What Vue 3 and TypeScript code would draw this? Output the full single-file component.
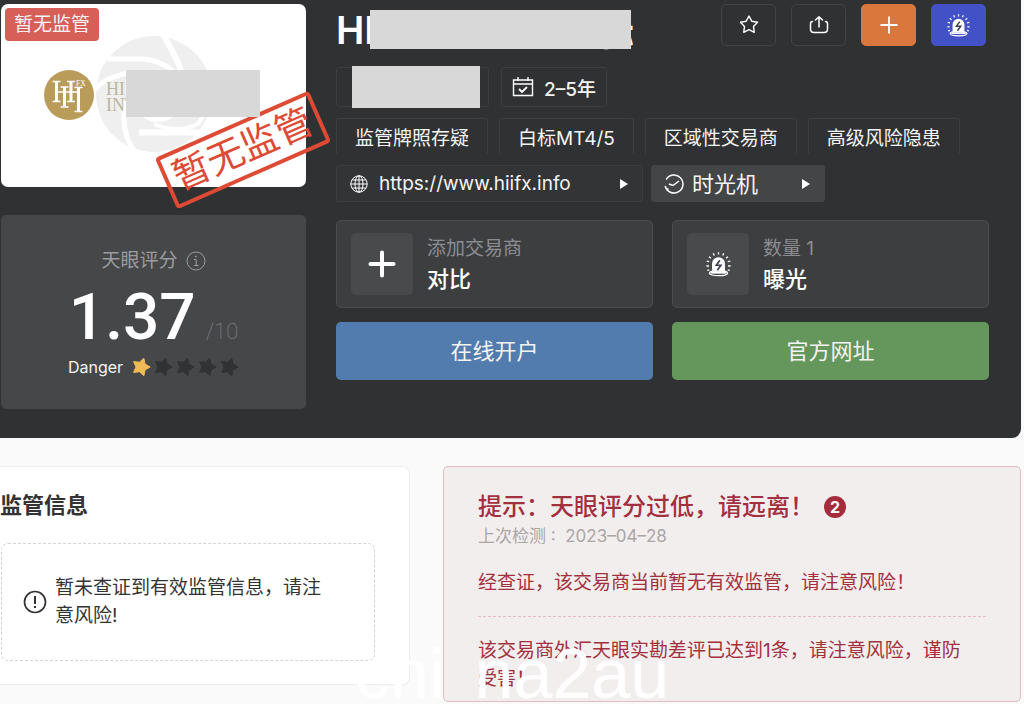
<script setup lang="ts">
const tags: string[] = ['监管牌照存疑', '白标MT4/5', '区域性交易商', '高级风险隐患']
const score = { value: '1.37', level: 'Danger', filled: 1, total: 5 }

function points(n: number, radius: number, inner: number, start: number): string {
  const out: string[] = []
  for (let i = 0; i < n * 2; i++) {
    const r = i % 2 ? inner : radius
    const a = start + (i * Math.PI) / n
    out.push(`${(10 + r * Math.cos(a)).toFixed(2)},${(10 + r * Math.sin(a)).toFixed(2)}`)
  }
  return out.join(' ')
}
const tiltedStar = points(5, 9.2, 5, 0)
const uprightStar = points(5, 9, 4.7, -Math.PI / 2)
</script>

<template>
  <div class="page">
    <svg class="defs" aria-hidden="true">
      <symbol id="siren" viewBox="0 0 24 24">
        <path d="M5.800 19V11.200a6.200 6.200 0 0 1 12.400 0V19z" fill="#fff" />
        <ellipse cx="12" cy="20.400" rx="8.800" ry="2.400" fill="none" stroke="#fff" stroke-width="1.200" />
        <path d="M4.500 19h15v1.800h-15z" fill="#fff" />
        <path class="bolt" d="M13.300 8 9.900 12.700h4.400L10.900 17.500" fill="none" stroke-width="1.600" />
        <path d="M12 .2v2.300M7 1.200l.9 2.100M17 1.200l-.9 2.100M2.900 4.500l1.800 1.400M21.100 4.500l-1.800 1.400M.7 8.800l2.400.5M23.300 8.800l-2.400.5M.4 13.400h2.400M23.600 13.400h-2.400M1.200 17.600l1.900-.5M22.800 17.600l-1.900-.5" stroke="#fff" stroke-width="1.300" />
      </symbol>
    </svg>

    <section class="hero">
      <div class="side">
        <div class="logo-card">
          <span class="flag">暂无监管</span>
          <svg class="aperture" viewBox="0 0 120 120" aria-hidden="true">
            <circle cx="60" cy="60" r="58" fill="#efefef" />
            <circle cx="64" cy="62" r="26" fill="#fff" />
            <g fill="none" stroke="#fff">
              <path d="M14 25H50Q76 28 90 50" stroke-width="5" />
              <path d="M69 0 83 26Q92 44 84 70" stroke-width="6" />
              <path d="M120 66 104 90Q84 100 60 90" stroke-width="4" />
              <path d="M45 98.500H112" stroke-width="6" />
              <path d="M44 122Q24 98 32 66" stroke-width="5" />
              <path d="M0 56Q12 42 40 38" stroke-width="5" />
            </g>
          </svg>
          <div class="brand">
            <svg class="mark" viewBox="0 0 50 50" role="img" aria-label="HII FX">
              <circle cx="25" cy="25" r="25" fill="#b99b5a" />
              <g fill="none" stroke="#fff">
                <path d="M12.500 12v19M20.500 17v19M27 12v19M34.500 18v23" stroke-width="3" />
                <path d="M8.500 11.500h8M8.500 31.500h8M16.500 17h8M16.500 37h8M23 11.500h8M23 31.500h8M30.500 17.500h8M30.500 41.500h8M12 22h23" stroke-width="1.500" />
              </g>
              <text x="32" y="16" font-size="7.500" fill="#fff" font-family="Liberation Serif, serif">FX</text>
            </svg>
            <span class="brand-name">HI<br />INT</span>
          </div>
          <span class="stamp">暂无监管</span>
          <span class="patch patch-logo"></span>
        </div>

        <div class="score-card">
          <div class="score-label">
            天眼评分
            <svg width="20" height="20" viewBox="0 0 20 20" fill="none" stroke="#9b9c9e">
              <circle cx="10" cy="10" r="9" /><path d="M8 8.500h2.200v6M8 14.500h4.500" /><circle cx="10" cy="5.500" r=".6" />
            </svg>
          </div>
          <div class="score-value"><strong>{{ score.value }}</strong><span>/10</span></div>
          <div class="score-level">
            <span>{{ score.level }}</span>
            <span class="stars">
              <svg v-for="i in score.total" :key="i" width="20" height="20" viewBox="0 0 20 20" :class="{ on: i <= score.filled }">
                <polygon :points="tiltedStar" />
              </svg>
            </span>
          </div>
        </div>
      </div>

      <div class="main">
        <header class="head">
          <h1>HI<span class="patch patch-title"></span><span class="title-tail">标</span></h1>
          <div class="actions">
            <button type="button" aria-label="收藏">
              <svg width="20" height="20" viewBox="0 0 20 20" fill="none" stroke="#fff" stroke-width="1.400" stroke-linejoin="round"><polygon :points="uprightStar" /></svg>
            </button>
            <button type="button" aria-label="分享">
              <svg width="20" height="20" viewBox="0 0 20 20" fill="none" stroke="#fff" stroke-width="1.500" stroke-linecap="round" stroke-linejoin="round"><path d="M3.500 6.500Q1.500 6.500 1.500 9v5q0 3.500 3.500 3.500h10q3.500 0 3.500-3.500V9q0-2.500-2-2.500M10 12V2M6.500 5 10 1.800 13.500 5" /></svg>
            </button>
            <button type="button" class="orange" aria-label="添加">
              <svg width="20" height="20" viewBox="0 0 20 20" stroke="#fff" stroke-width="1.800"><path d="M10 1.500v17M1.500 10h17" /></svg>
            </button>
            <button type="button" class="indigo" aria-label="曝光">
              <svg width="23" height="23"><use href="#siren" /></svg>
            </button>
          </div>
        </header>

        <div class="row facts">
          <span class="chip country"><span class="patch patch-country"></span></span>
          <span class="chip years">
            <svg width="22" height="22" viewBox="0 0 22 22" fill="none" stroke="#fff" stroke-width="1.400"><path d="M1.500 4h19v15.500h-19zM1.500 8h19M6 1v4M16 1v4" /><path d="m7 13 3 3 5-5" stroke-width="1.800" /></svg>
            2–5年
          </span>
        </div>

        <div class="row tags">
          <span v-for="t in tags" :key="t" class="chip tag">{{ t }}</span>
        </div>

        <div class="row links">
          <a class="chip site" href="#">
            <svg width="18" height="18" viewBox="0 0 18 18" fill="none" stroke="#fff"><circle cx="9" cy="9" r="8.200" /><ellipse cx="9" cy="9" rx="4" ry="8.200" /><path d="M9 1v16M1 9h16M2.200 5h13.600M2.200 13h13.600" /></svg>
            <span>https://www.hiifx.info</span>
            <svg class="caret" width="8" height="10" viewBox="0 0 8 10"><path d="M0 0l8 5-8 5z" fill="#fff" /></svg>
          </a>
          <a class="chip machine" href="#">
            <svg width="20" height="20" viewBox="0 0 20 20" fill="none" stroke="#fff" stroke-width="1.500"><path d="M2.200 5.500A9 9 0 1 1 1.200 12M5 10l4 1.500L15 7M2 15.500l2.500-.8" /></svg>
            <span>时光机</span>
            <svg class="caret" width="8" height="10" viewBox="0 0 8 10"><path d="M0 0l8 5-8 5z" fill="#fff" /></svg>
          </a>
        </div>

        <div class="grid">
          <button type="button" class="panel">
            <span class="tile"><svg width="28" height="28" viewBox="0 0 28 28" stroke="#fff" stroke-width="4" stroke-linecap="round"><path d="M14 2.500v23M2.500 14h23" /></svg></span>
            <span class="panel-text"><small>添加交易商</small><b>对比</b></span>
          </button>
          <button type="button" class="panel">
            <span class="tile"><svg width="25" height="25"><use href="#siren" /></svg></span>
            <span class="panel-text"><small>数量 1</small><b>曝光</b></span>
          </button>
          <a class="cta blue" href="#">在线开户</a>
          <a class="cta green" href="#">官方网址</a>
        </div>
      </div>
    </section>

    <section class="lower">
      <article class="info">
        <h2>监管信息</h2>
        <div class="notice">
          <svg width="24" height="24" viewBox="0 0 24 24" fill="none" stroke="#333" stroke-width="1.700"><circle cx="12" cy="12" r="10.500" /><path d="M12 6v8M12 16v2" stroke-width="2" /></svg>
          <p>暂未查证到有效监管信息，请注意风险!</p>
        </div>
      </article>
      <article class="alert">
        <h2>提示：天眼评分过低，请远离！<span class="count">2</span></h2>
        <p class="checked">上次检测 :&nbsp; 2023–04–28</p>
        <p class="item">经查证，该交易商当前暂无有效监管，请注意风险！</p>
        <p class="item">该交易商外汇天眼实勘差评已达到1条，请注意风险，谨防受害！</p>
      </article>
    </section>
    <div class="watermark" aria-hidden="true"><span>chi</span><span>na2au</span></div>
  </div>
</template>

<style>
body {
  margin: 0;
  background: #fafafa;
}
</style>

<style scoped>
.page {
  position: relative;
  min-height: 100vh;
  box-sizing: border-box;
  padding-right: 3px;
  font-family: Inter, "Noto Sans CJK SC", sans-serif;
  font-size: 19px;
  color: #f4f4f4;
}
.page * { box-sizing: border-box; }
.page button { font: inherit; color: inherit; cursor: pointer; }
.page a { color: inherit; text-decoration: none; }
h1, h2, p { margin: 0; }
svg { flex: none; display: block; }
.defs { position: absolute; width: 0; height: 0; }
.hero {
  display: grid;
  grid-template-columns: 306px 1fr;
  gap: 30px;
  padding: 4px 32px 29px 0;
  background: #303133;
  border-radius: 0 0 9px 0;
}
.side { display: flex; flex-direction: column; gap: 28px; padding-left: 1px; }
.logo-card {
  position: relative;
  height: 183px;
  padding-top: 66px;
  background: #fff;
  border-radius: 7px;
}
.flag {
  position: absolute;
  left: 4px;
  top: 4px;
  padding: 0 9px;
  border-radius: 4px;
  background: #d65f57;
  line-height: 33px;
}
.aperture { position: absolute; left: 93px; top: 30px; width: 120px; height: 120px; }
.brand { position: relative; display: flex; gap: 12px; padding-left: 43px; }
.mark { width: 50px; height: 50px; }
.brand-name {
  padding-top: 11px;
  font: 18px/16px "Liberation Serif", serif;
  color: #bcb6a0;
}
.patch { background: #d8d8d8; }
.patch-logo { position: absolute; left: 125px; top: 66px; width: 134px; height: 47px; }
.stamp {
  position: absolute;
  left: 158px;
  top: 118px;
  width: 168px;
  height: 56px;
  border: 4px solid #dd4b35;
  border-radius: 4px;
  transform: rotate(-23.7deg);
  text-align: center;
  font-size: 37px;
  line-height: 46px;
  white-space: nowrap;
  color: #dd4b35;
}
.score-card {
  min-height: 194px;
  display: flex;
  flex-direction: column;
  align-items: center;
  padding-top: 31px;
  border-radius: 5px;
  background: #464749;
}
.score-label { display: flex; align-items: center; gap: 8px; line-height: 30px; color: #9b9c9e; }
.score-value {
  display: flex;
  align-items: baseline;
  gap: 10px;
  height: 80px;
  font-family: Roboto, sans-serif;
  line-height: 84px;
}
.score-value strong { font-size: 64px; font-weight: 500; color: #fff; }
.score-value span { font-size: 22px; font-weight: 100; line-height: 30px; color: #8b8c8e; }
.score-level { display: flex; align-items: center; gap: 8px; font-size: 16px; line-height: 22px; }
.stars { display: flex; gap: 2px; }
.stars polygon { fill: #303234; stroke: #303234; stroke-linejoin: round; }
.stars .on polygon { fill: #eebb57; stroke: #eebb57; }
.head { display: flex; justify-content: space-between; height: 42px; padding-right: 3px; }
h1 { display: flex; align-items: center; height: 51px; font-size: 38px; font-weight: 600; white-space: nowrap; color: #fff; }
.patch-title { position: relative; z-index: 1; width: 261px; height: 39px; margin-left: -5px; }
.title-tail { margin-left: -33px; font-size: 36px; }
.actions { display: flex; gap: 15px; }
.actions button {
  display: grid;
  place-items: center;
  width: 55px;
  height: 42px;
  padding: 0;
  border: 1px solid #434446;
  border-radius: 5px;
  background: none;
}
.actions .orange { background: #d9773c; border-color: #d9773c; }
.actions .indigo { background: #4351c6; border-color: #4351c6; }
.bolt { stroke: #3d4050; }
.row { display: flex; gap: 12px; }
.chip { display: flex; align-items: center; border: 1px solid #3d3e40; border-radius: 3px; white-space: nowrap; }
.facts { margin-top: 21px; height: 40px; }
.country { width: 153px; padding-left: 15px; }
.patch-country { width: 128px; height: 42px; }
.years { gap: 10px; padding: 0 10px; font-weight: 500; }
.tags { gap: 11px; margin-top: 11px; height: 36px; }
.tag { padding: 0 18px; border-bottom: 0; border-radius: 3px 3px 0 0; }
.links { gap: 8px; margin-top: 11px; height: 37px; }
.site { width: 307px; gap: 11px; padding: 0 14px 0 13px; background: #333436; }
.machine { width: 174px; gap: 8px; padding: 0 14px 0 12px; font-size: 22px; line-height: 32px; background: #444547; border-color: #444547; }
.caret { margin-left: auto; }
.grid { display: grid; grid-template-columns: 1fr 1fr; gap: 14px 19px; margin-top: 18px; }
.panel {
  display: flex;
  align-items: center;
  gap: 14px;
  height: 88px;
  padding: 0 14px;
  border: 1px solid #4b4c4e;
  border-radius: 5px;
  background: #3d3e40;
  text-align: left;
}
.tile { display: grid; place-items: center; width: 62px; height: 62px; border-radius: 5px; background: #484a4c; }
.panel-text { display: flex; flex-direction: column; }
.panel-text small { font-size: 19px; line-height: 30px; color: #8c8d90; }
.panel-text b { font-size: 22px; font-weight: 500; line-height: 30px; color: #fff; }
.cta { border-radius: 5px; text-align: center; font-size: 22px; line-height: 58px; }
.blue { background: #537cae; }
.green { background: #65965b; }
.lower { display: grid; grid-template-columns: 410fr 578fr; gap: 33px; align-items: start; margin-top: 28px; }
.info {
  padding: 20px 34px 23px 0;
  border: 1px solid #eee;
  border-left: 0;
  border-radius: 0 7px 7px 0;
  background: #fff;
  color: #333;
}
.info h2 { font-size: 22px; font-weight: 600; line-height: 36px; }
.notice {
  display: flex;
  align-items: center;
  gap: 8px;
  height: 118px;
  margin: 20px 0 0 1px;
  padding: 0 40px 0 21px;
  border: 1px dashed #d4d4d4;
  border-radius: 7px;
}
.notice p { line-height: 28px; }
.alert {
  padding: 23px 34px 8px;
  border: 1px solid #e0bdc2;
  border-radius: 5px;
  background: #f3eeee;
  color: #a3303e;
}
.alert h2 { display: flex; align-items: center; font-size: 24px; font-weight: 500; line-height: 34px; white-space: nowrap; }
.count {
  width: 22px;
  height: 22px;
  margin-left: 10px;
  border-radius: 50%;
  background: #a52c3b;
  color: #fff;
  text-align: center;
  font-size: 16px;
  font-weight: 700;
  line-height: 22px;
}
.checked { font-size: 17px; line-height: 24px; color: #aaa6a6; }
.item { padding: 21px 12px 19px 0; line-height: 28px; }
.item + .item { padding: 20px 12px 0 0; border-top: 1px dashed #e0bfc3; }
.watermark {
  position: absolute;
  left: 355px;
  bottom: 0;
  display: flex;
  gap: 30px;
  font-family: "Liberation Sans", sans-serif;
  font-size: 70px;
  line-height: 60px;
  color: #fff;
  pointer-events: none;
}
</style>
